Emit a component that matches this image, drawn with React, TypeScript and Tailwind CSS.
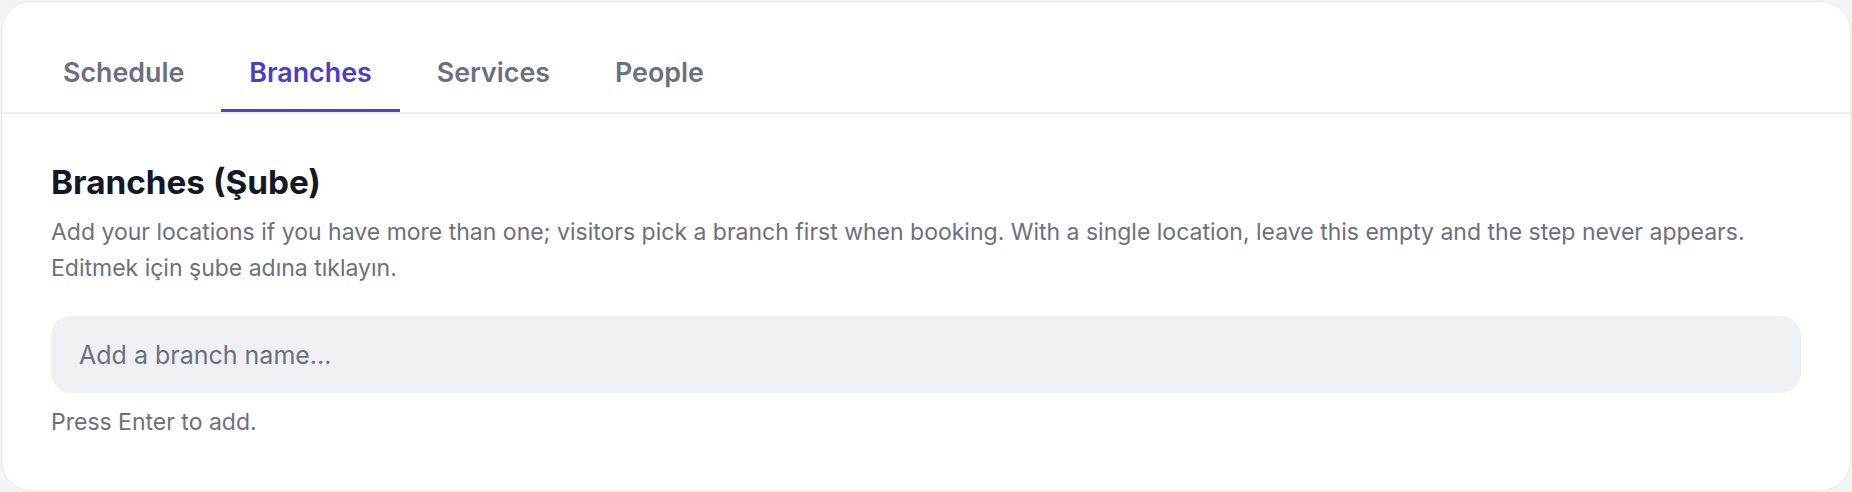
import React from "react";

const tabs = ["Schedule", "Branches", "Services", "People"];

export default function App() {
  return (
    <div className="h-[492px] w-full bg-[#f3f4f6] p-px" style={{ fontFamily: "Inter, 'Noto Sans', sans-serif" }}>
      <div className="h-full overflow-hidden rounded-[30px] border border-[#e7e8eb] bg-white">
        <div className="flex gap-[9px] border-b-2 border-[#eceef1] px-[33px] pt-[52px]">
          {tabs.map((t) => {
            const active = t === "Branches";
            return (
              <div
                key={t}
                className={
                  active
                    ? "border-b-[3px] border-[#5044cc] px-[28px] pb-[19px] text-[26.8px] leading-[36px] font-semibold text-[#4a3ec8]"
                    : "border-b-[3px] border-transparent px-[28px] pb-[19px] text-[26.8px] leading-[36px] font-semibold text-[#6b7080]"
                }
              >
                {t}
              </div>
            );
          })}
        </div>
        <div className="px-[49px] pt-[48px]">
          <h2 className="text-[33.3px] leading-[40px] font-bold text-[#111827]">Branches (Şube)</h2>
          <p className="mt-[13px] text-[23px] leading-[35.5px] text-[#6b7080]">
            Add your locations if you have more than one; visitors pick a branch first when booking. With a single location, leave this empty and the step never appears.
            <br />
            Editmek için şube adına tıklayın.
          </p>
          <input
            className="mt-[30px] h-[77px] w-full rounded-[20px] bg-[#eef0f3] px-[28px] text-[25px] text-[#111827] outline-none placeholder:text-[#6b7080]"
            placeholder="Add a branch name..."
          />
          <p className="mt-[14px] text-[23px] leading-[30px] text-[#6b7080]">Press Enter to add.</p>
        </div>
      </div>
    </div>
  );
}
